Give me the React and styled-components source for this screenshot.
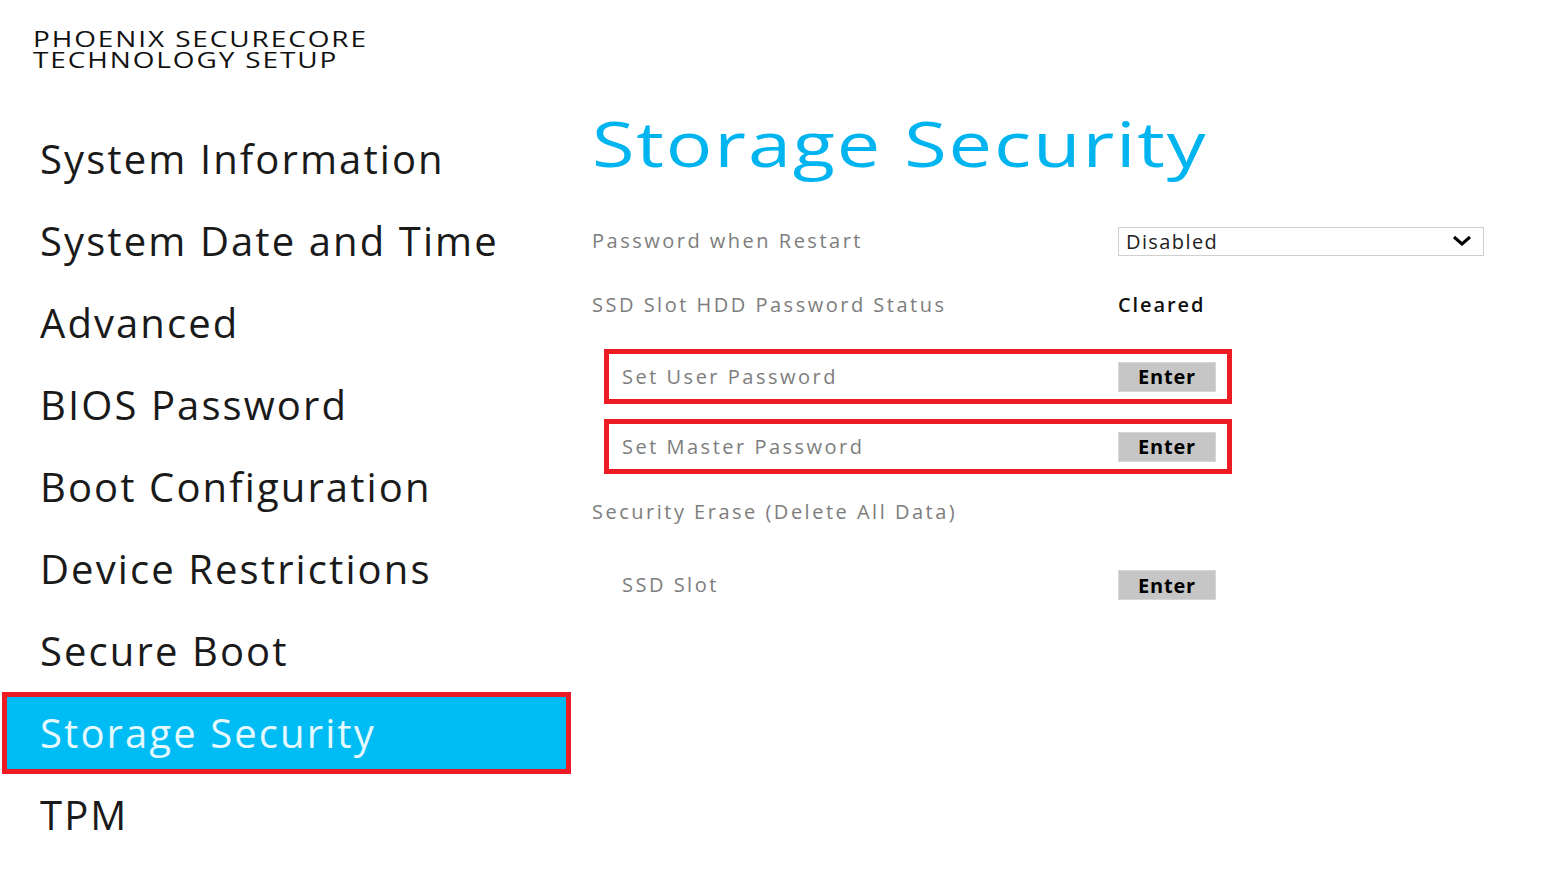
import React from "react";
import styled, { createGlobalStyle } from "styled-components";

const Global = createGlobalStyle`
  html, body { margin: 0; padding: 0; background: #ffffff; }
  body { font-family: "Open Sans", "Noto Sans", "Liberation Sans", sans-serif; }
`;

const Page = styled.div`
  width: 1547px;
  height: 875px;
  overflow: hidden;
  background: #fff;
  display: flex;
  flex-direction: column;
`;

const Header = styled.header`
  padding: 28px 0 0 33px;
  height: 106px;
  box-sizing: border-box;
  font-size: 22px;
  line-height: 21px;
  color: #111;
  letter-spacing: 1.5px;
`;

const HeaderLine = styled.div`
  transform: scaleX(1.27);
  transform-origin: left center;
  white-space: nowrap;
`;

const Body = styled.div`
  display: flex;
  align-items: flex-start;
`;

const Sidebar = styled.nav`
  margin-top: 12px;
  margin-left: 2px;
  width: 569px;
  display: flex;
  flex-direction: column;
`;

const NavItem = styled.div`
  height: 82px;
  box-sizing: border-box;
  border: 5px solid ${(p) => (p.$active ? "#ed1c24" : "transparent")};
  background: ${(p) => (p.$active ? "#00bcf4" : "transparent")};
  color: ${(p) => (p.$active ? "#e4f9ff" : "#1a1a1a")};
  padding-left: 33px;
  font-size: 40px;
  line-height: 72px;
  letter-spacing: 2.1px;
  white-space: nowrap;
`;

const Content = styled.main`
  margin-left: 21px;
  display: flex;
  flex-direction: column;
  width: 900px;
`;

const Title = styled.h1`
  margin: 0 0 46px 0;
  font-weight: 400;
  font-size: 62px;
  line-height: 74px;
  color: #00b4f0;
  letter-spacing: 1.5px;
  transform: scaleX(1.25);
  transform-origin: left center;
  white-space: nowrap;
`;

const Row = styled.div`
  display: flex;
  align-items: center;
  height: 30px;
  margin-top: ${(p) => p.$gap || 0}px;
  padding-left: ${(p) => p.$indent || 0}px;
`;

const Label = styled.div`
  width: ${(p) => p.$width || 526}px;
  flex: none;
  font-size: 20px;
  line-height: 30px;
  color: #7d7d7d;
  letter-spacing: 2.5px;
  white-space: nowrap;
`;

const Value = styled.div`
  font-size: 20px;
  line-height: 30px;
  color: #111;
  font-weight: 600;
  letter-spacing: 1.9px;
`;

const Select = styled.div`
  width: 366px;
  height: 29px;
  box-sizing: border-box;
  border: 1px solid #cfcfcf;
  display: flex;
  align-items: center;
  justify-content: space-between;
  padding: 0 11px 0 7px;
  font-size: 20px;
  color: #222;
  letter-spacing: 1.4px;
`;

const BoxRow = styled.div`
  margin-top: ${(p) => p.$gap || 0}px;
  margin-left: 12px;
  width: 628px;
  height: 55px;
  box-sizing: border-box;
  border: 5px solid #ed1c24;
  display: flex;
  align-items: center;
  padding-left: 13px;
`;

const EnterButton = styled.div`
  width: 98px;
  height: 30px;
  box-sizing: border-box;
  background: #c6c6c6;
  border: 1px solid #d6d6d6;
  display: flex;
  align-items: center;
  justify-content: center;
  font-size: 20px;
  font-weight: 700;
  color: #000;
  letter-spacing: 0.8px;
`;

const Chevron = () => (
  <svg width="20" height="12" viewBox="0 0 20 12">
    <path d="M2 2 L10 9 L18 2" fill="none" stroke="#000" strokeWidth="3" />
  </svg>
);

const navItems = [
  "System Information",
  "System Date and Time",
  "Advanced",
  "BIOS Password",
  "Boot Configuration",
  "Device Restrictions",
  "Secure Boot",
  "Storage Security",
  "TPM",
];

export default function App() {
  return (
    <>
      <Global />
      <Page>
        <Header>
          <HeaderLine>PHOENIX SECURECORE</HeaderLine>
          <HeaderLine>TECHNOLOGY SETUP</HeaderLine>
        </Header>
        <Body>
          <Sidebar>
            {navItems.map((n) => (
              <NavItem key={n} $active={n === "Storage Security"}>
                {n}
              </NavItem>
            ))}
          </Sidebar>
          <Content>
            <Title>Storage Security</Title>
            <Row>
              <Label>Password when Restart</Label>
              <Select>
                <span>Disabled</span>
                <Chevron />
              </Select>
            </Row>
            <Row $gap={34}>
              <Label>SSD Slot HDD Password Status</Label>
              <Value>Cleared</Value>
            </Row>
            <BoxRow $gap={29}>
              <Label $width={496}>Set User Password</Label>
              <EnterButton>Enter</EnterButton>
            </BoxRow>
            <BoxRow $gap={15}>
              <Label $width={496}>Set Master Password</Label>
              <EnterButton>Enter</EnterButton>
            </BoxRow>
            <Row $gap={23}>
              <Label>Security Erase (Delete All Data)</Label>
            </Row>
            <Row $gap={43} $indent={30}>
              <Label $width={496}>SSD Slot</Label>
              <EnterButton>Enter</EnterButton>
            </Row>
          </Content>
        </Body>
      </Page>
    </>
  );
}
